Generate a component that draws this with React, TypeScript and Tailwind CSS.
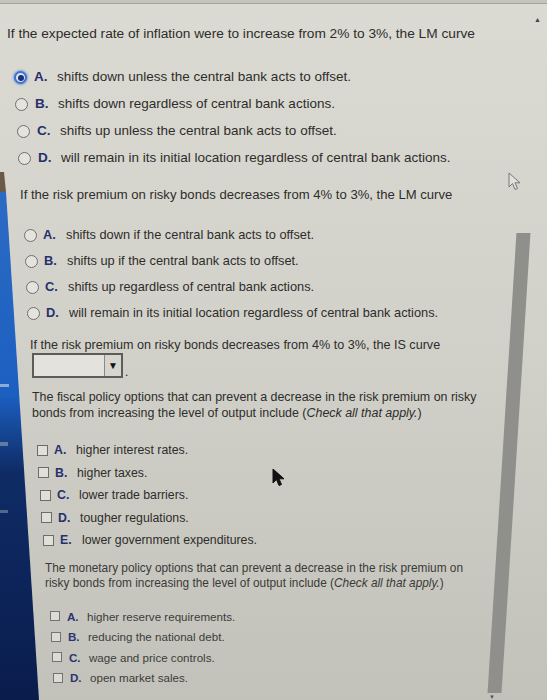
import React from 'react';

type Opt = { letter: string; text: string; row: string };

const Q1: Opt[] = [
  { letter: 'A.', text: 'shifts down unless the central bank acts to offset.', row: 'ml-[14px]' },
  { letter: 'B.', text: 'shifts down regardless of central bank actions.', row: 'ml-[15px]' },
  { letter: 'C.', text: 'shifts up unless the central bank acts to offset.', row: 'ml-[17px]' },
  { letter: 'D.', text: 'will remain in its initial location regardless of central bank actions.', row: 'ml-[18px]' },
];

const Q2: Opt[] = [
  { letter: 'A.', text: 'shifts down if the central bank acts to offset.', row: 'ml-[24px]' },
  { letter: 'B.', text: 'shifts up if the central bank acts to offset.', row: 'ml-[25px]' },
  { letter: 'C.', text: 'shifts up regardless of central bank actions.', row: 'ml-[26px]' },
  { letter: 'D.', text: 'will remain in its initial location regardless of central bank actions.', row: 'ml-[27px]' },
];

const Q4: Opt[] = [
  { letter: 'A.', text: 'higher interest rates.', row: 'ml-[37px]' },
  { letter: 'B.', text: 'higher taxes.', row: 'ml-[38px]' },
  { letter: 'C.', text: 'lower trade barriers.', row: 'ml-[40px]' },
  { letter: 'D.', text: 'tougher regulations.', row: 'ml-[41px]' },
  { letter: 'E.', text: 'lower government expenditures.', row: 'ml-[43px]' },
];

const Q5: Opt[] = [
  { letter: 'A.', text: 'higher reserve requirements.', row: 'ml-[50px]' },
  { letter: 'B.', text: 'reducing the national debt.', row: 'ml-[51px]' },
  { letter: 'C.', text: 'wage and price controls.', row: 'ml-[52px]' },
  { letter: 'D.', text: 'open market sales.', row: 'ml-[53px]' },
];

function Radio({ on }: { on?: boolean }) {
  if (on) {
    return (
      <span className="flex h-[13px] w-[13px] shrink-0 items-center justify-center rounded-full border-2 border-[#3c74d6] bg-[#dfe6f3] shadow-[0_0_2px_1px_rgba(70,120,220,0.55)]">
        <span className="h-[6px] w-[6px] rounded-full bg-[#1c2f78]" />
      </span>
    );
  }
  return <span className="h-[13px] w-[13px] shrink-0 rounded-full border-[1.5px] border-[#6f6f6c] bg-[#e4e3dd]" />;
}

function Box({ small }: { small?: boolean }) {
  return (
    <span
      className={
        small
          ? 'h-[10px] w-[10px] shrink-0 border-[1.5px] border-[#737370] bg-[#dcdbd4]'
          : 'h-[11px] w-[11px] shrink-0 border-[1.5px] border-[#6c6c69] bg-[#e0dfd8]'
      }
    />
  );
}

function Cursor({ white }: { white?: boolean }) {
  return (
    <svg width="14" height="20" viewBox="0 0 14 20">
      <path
        d="M1 1 L1 15 L4.5 11.5 L7 17.5 L9.5 16.5 L7 10.8 L12 10.8 Z"
        fill={white ? '#e2e2dc' : '#111'}
        stroke={white ? '#777' : '#111'}
        strokeWidth="1"
        strokeLinejoin="round"
      />
    </svg>
  );
}

export default function App() {
  return (
    <div className="relative flex h-[700px] w-[547px] flex-col overflow-hidden bg-linear-to-b from-[#dcdbd3] via-[#d2d1c9] to-[#c2c2ba] font-['Liberation_Sans',Arial,sans-serif] text-[#2d2d2b]">
      <div className="h-[4px] shrink-0 border-b border-[#a3a29c] bg-[#c4c3bc]" />

      <div className="flex flex-1">
        <div className="flex-1">
          {/* question 1 */}
          <p className="ml-[7px] mt-[22px] text-[13.7px] leading-[16px]">
            If the expected rate of inflation were to increase from 2% to 3%, the LM curve
          </p>
          <div className="mt-[22px] flex flex-col">
            {Q1.map((o, i) => (
              <div key={o.letter} className={`flex h-[27px] items-center text-[13.5px] ${o.row}`}>
                <Radio on={i === 0} />
                <span className="ml-[7px] w-[23px] font-bold text-[#26306c]">{o.letter}</span>
                <span>{o.text}</span>
              </div>
            ))}
          </div>

          {/* question 2 */}
          <p className="ml-[20px] mt-[15px] text-[13.1px] leading-[16px]">
            If the risk premium on risky bonds decreases from 4% to 3%, the LM curve
          </p>
          <div className="mt-[19px] flex flex-col">
            {Q2.map((o) => (
              <div key={o.letter} className={`flex h-[26px] items-center text-[12.8px] ${o.row}`}>
                <Radio />
                <span className="ml-[6px] w-[23px] font-bold text-[#26306c]">{o.letter}</span>
                <span>{o.text}</span>
              </div>
            ))}
          </div>

          {/* question 3 */}
          <p className="ml-[30px] mt-[11px] text-[12.6px] leading-[16px]">
            If the risk premium on risky bonds decreases from 4% to 3%, the IS curve
          </p>
          <div className="ml-[32px] flex items-end">
            <div className="flex h-[25px] w-[91px] border-2 border-[#5c5c59] bg-[#e3e2dc]">
              <div className="flex-1" />
              <div className="flex w-[17px] items-center justify-center border-l border-[#8a8a86] bg-[#d6d5cf] text-[10px] leading-none text-[#111]">
                ▼
              </div>
            </div>
            <span className="ml-[2px] text-[12px] leading-[12px]">.</span>
          </div>

          {/* question 4 */}
          <div className="ml-[32px] mt-[11px] flex flex-col text-[12.45px] leading-[16px]">
            <span>The fiscal policy options that can prevent a decrease in the risk premium on risky</span>
            <span>
              bonds from increasing the level of output include (<i>Check all that apply.</i>)
            </span>
          </div>
          <div className="mt-[18px] flex flex-col">
            {Q4.map((o) => (
              <div key={o.letter} className={`flex h-[22.5px] items-center text-[12.3px] ${o.row}`}>
                <Box />
                <span className="ml-[6px] w-[22px] font-bold text-[#26306c]">{o.letter}</span>
                <span>{o.text}</span>
              </div>
            ))}
          </div>

          {/* question 5 */}
          <div className="ml-[45px] mt-[9.5px] flex flex-col text-[11.85px] leading-[15px] text-[#3a3a38]">
            <span>The monetary policy options that can prevent a decrease in the risk premium on</span>
            <span>
              risky bonds from increasing the level of output include (<i>Check all that apply.</i>)
            </span>
          </div>
          <div className="mt-[15px] flex flex-col text-[#3c3c3a]">
            {Q5.map((o) => (
              <div key={o.letter} className={`flex h-[20.5px] items-center text-[11.6px] ${o.row}`}>
                <Box small />
                <span className="ml-[7px] w-[20px] font-bold text-[#2c3474]">{o.letter}</span>
                <span>{o.text}</span>
              </div>
            ))}
          </div>
        </div>

        {/* scrollbar */}
        <div className="flex w-[52px] shrink-0 flex-col">
          <span className="ml-[39px] mt-[12px] text-[7px] leading-none text-[#444]">▲</span>
          <div className="ml-[7px] mt-[210px] h-[460px] w-[14px] -skew-x-[3.6deg] bg-[#8f8f8b]" />
          <span className="-ml-[6px] mt-[1px] text-[6px] leading-none text-[#555]">▼</span>
        </div>
      </div>

      {/* desktop showing at the photo's left edge */}
      <svg className="absolute left-0 top-0" width="40" height="700" viewBox="0 0 40 700">
        <defs>
          <linearGradient id="desk" x1="0" y1="0" x2="0" y2="1">
            <stop offset="0" stopColor="#2c6bc4" />
            <stop offset="0.4" stopColor="#1b5fc0" />
            <stop offset="0.55" stopColor="#0f2c66" />
            <stop offset="1" stopColor="#0a1c4c" />
          </linearGradient>
        </defs>
        <polygon points="0,172 4,172 6,192 0,192" fill="#6b5a45" />
        <polygon points="0,192 6,192 39,700 0,700" fill="url(#desk)" />
        <rect x="0" y="384" width="9" height="3" fill="#d9dde6" opacity="0.6" />
        <rect x="0" y="442" width="8" height="4" fill="#9aa3b8" opacity="0.6" />
        <rect x="0" y="510" width="8" height="3" fill="#9aa3b8" opacity="0.5" />
      </svg>

      <span className="absolute left-[508px] top-[172px]">
        <Cursor white />
      </span>
      <span className="absolute left-[272px] top-[468px]">
        <Cursor />
      </span>
    </div>
  );
}
